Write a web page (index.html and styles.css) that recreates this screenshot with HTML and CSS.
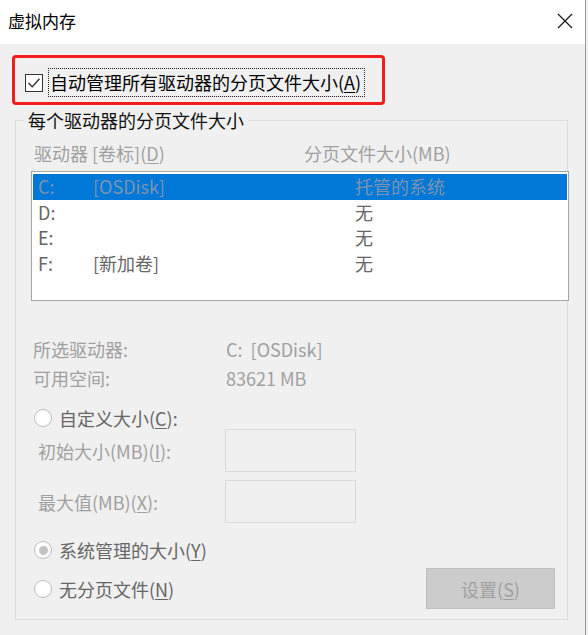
FILE: index.html
```html
<!DOCTYPE html>
<html lang="zh-CN">
<head>
<meta charset="utf-8">
<title>虚拟内存</title>
<link rel="stylesheet" href="styles.css">
</head>
<body>
<div class="window">
  <div class="titlebar">
    <span class="title">虚拟内存</span>
    <svg class="close" width="16" height="16" viewBox="0 0 16 16"><path d="M1 1 L15 15 M15 1 L1 15" stroke="#1a1a1a" stroke-width="1.3" fill="none"/></svg>
  </div>
  <div class="content">
    <div class="highlight">
      <div class="auto">
        <svg class="checkbox" width="18" height="18" viewBox="0 0 18 18"><rect x="0.5" y="0.5" width="17" height="17" fill="#fdfdfd" stroke="#333" stroke-width="1"/><path d="M3.5 9 L7.3 12.8 L14.5 4.8" stroke="#333" stroke-width="1.4" fill="none"/></svg>
        <span class="focus">自动管理所有驱动器的分页文件大小(<u>A</u>)</span>
      </div>
    </div>
    <fieldset class="group">
      <legend>每个驱动器的分页文件大小</legend>
      <div class="cols">
        <span class="col1">驱动器 [卷标](<u>D</u>)</span>
        <span>分页文件大小(MB)</span>
      </div>
      <div class="list">
        <div class="row selected"><span>C:</span><span>[OSDisk]</span><span>托管的系统</span></div>
        <div class="row"><span>D:</span><span></span><span>无</span></div>
        <div class="row"><span>E:</span><span></span><span>无</span></div>
        <div class="row"><span>F:</span><span>[新加卷]</span><span>无</span></div>
      </div>
      <div class="info">
        <span>所选驱动器:</span><span>C:&nbsp; [OSDisk]</span>
        <span>可用空间:</span><span>83621 MB</span>
      </div>
      <div class="radio first"><span class="dot"></span><span>自定义大小(<u>C</u>):</span></div>
      <div class="field"><span class="flabel">初始大小(MB)(<u>I</u>):</span><span class="input"></span></div>
      <div class="field second"><span class="flabel">最大值(MB)(<u>X</u>):</span><span class="input"></span></div>
      <div class="radio sys"><span class="dot on"></span><span>系统管理的大小(<u>Y</u>)</span></div>
      <div class="bottom">
        <div class="radio"><span class="dot"></span><span>无分页文件(<u>N</u>)</span></div>
        <div class="button">设置(<u>S</u>)</div>
      </div>
    </fieldset>
  </div>
</div>
</body>
</html>
```

FILE: styles.css
```css
html, body {
  margin: 0;
  padding: 0;
  background: #f0f0f0;
}
body {
  width: 588px;
  height: 635px;
  overflow: hidden;
  font-family: "Noto Sans CJK SC", "Microsoft YaHei", sans-serif;
  font-size: 18px;
  line-height: 24px;
  color: #000;
}
u { text-decoration: underline; text-underline-offset: 2px; text-decoration-thickness: 1px; }
.window {
  width: 585px;
  height: 635px;
  border-right: 1px solid #9a9a9a;
  background: #f0f0f0;
}
.titlebar {
  height: 44px;
  background: #fff;
  display: flex;
  align-items: center;
  justify-content: space-between;
  padding: 0 12px 2px 8px;
  box-sizing: border-box;
}
.title {
  font-size: 17px;
  color: #000;
}
.content {
  padding: 11px 0 0 12px;
}
.highlight {
  width: 373px;
  height: 50px;
  box-sizing: border-box;
  border: 3px solid #f01e1e;
  border-radius: 4px;
  padding: 5px 0 0 10px;
  display: flex;
  align-items: center;
}
.auto {
  display: flex;
  align-items: center;
  gap: 5px;
}
.checkbox { display: block; }
.focus {
  border: 1px dotted #222;
  padding: 1px 3px 1px 1px;
  line-height: 25px;
  color: #000;
}
.group {
  margin: 3px 0 0 3px;
  width: 553px;
  box-sizing: border-box;
  border: 1px solid #dcdcdc;
  padding: 0 0 10px 0;
  min-width: 0;
}
.group legend {
  margin-left: 8px;
  padding: 0 4px;
  line-height: 24px;
  color: #111;
}
.cols {
  margin: 9px 0 0 18px;
  display: flex;
  color: #a0a0a0;
}
.col1 { width: 270px; }
.list {
  margin: 6px 0 0 15px;
  width: 538px;
  height: 130px;
  box-sizing: border-box;
  border: 1px solid #a6a6a6;
  background: #fff;
  padding: 2px 1px;
}
.row {
  display: grid;
  grid-template-columns: 55px 262px 1fr;
  height: 25.5px;
  line-height: 25.5px;
  padding-left: 5px;
  color: #666;
}
.row.selected {
  background: #0078d7;
  color: #7d93b0;
}
.info {
  margin: 36px 0 0 17px;
  display: grid;
  grid-template-columns: 193px auto;
  row-gap: 5px;
  color: #a0a0a0;
}
.radio {
  display: flex;
  align-items: center;
  gap: 7px;
  height: 20px;
  margin-left: 18px;
  color: #666;
}
.radio.first { margin-top: 18px; }
.radio.sys { margin-top: 17px; }
.dot {
  width: 18px;
  height: 18px;
  box-sizing: border-box;
  border: 1px solid #bcbcbc;
  border-radius: 50%;
  background: #fff;
  display: flex;
  align-items: center;
  justify-content: center;
}
.dot.on::after {
  content: "";
  width: 9px;
  height: 9px;
  border-radius: 50%;
  background: #c3c3c3;
}
.field {
  display: flex;
  align-items: center;
  margin: 1px 0 0 22px;
  color: #a0a0a0;
}
.field.second { margin-top: 8px; }
.flabel { width: 187px; }
.input {
  width: 131px;
  height: 43px;
  box-sizing: border-box;
  border: 1px solid #d9d9d9;
}
.bottom {
  display: flex;
  justify-content: space-between;
  align-items: center;
  margin: 8px 12px 0 0;
}
.bottom .radio { margin-left: 18px; }
.button {
  width: 129px;
  height: 41px;
  box-sizing: border-box;
  border: 1px solid #bfbfbf;
  background: #cccccc;
  color: #a0a0a0;
  display: flex;
  align-items: center;
  justify-content: center;
}
```
